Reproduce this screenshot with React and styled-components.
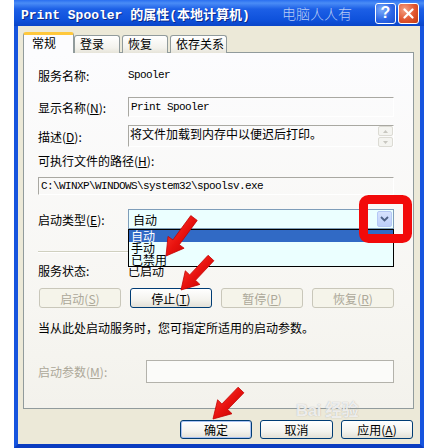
import React from "react";
import styled, { createGlobalStyle } from "styled-components";

const CJK = `"Noto Sans CJK SC", "Liberation Sans", sans-serif`;
const MONO = `"Liberation Mono", "Noto Sans CJK SC", monospace`;

const GlobalStyle = createGlobalStyle`
  html, body { margin: 0; padding: 0; background: #fff; }
  body { width: 434px; height: 448px; overflow: hidden; }
`;

const Page = styled.div`
  position: relative;
  width: 434px;
  height: 448px;
  padding-left: 14px;
  box-sizing: border-box;
  font-family: ${CJK};
  font-size: 12px;
  color: #000;
`;

const Window = styled.div`
  width: 410px;
  height: 448px;
  display: flex;
  flex-direction: column;
`;

const TitleBar = styled.div`
  height: 26px;
  flex: none;
  display: flex;
  align-items: center;
  padding: 0 5px 0 7px;
  background: linear-gradient(180deg, #2a6ff0 0%, #4a8cf6 12%, #1c5fe6 35%, #0f52dc 75%, #0a45c8 100%);
`;

const Title = styled.div`
  flex: 1;
  color: #fff;
  font-family: ${MONO};
  font-weight: bold;
  font-size: 13px;
  white-space: nowrap;
  text-shadow: 1px 1px 0 #0b2a8a;
`;

const Watermark = styled.span`
  font-family: ${CJK};
  font-size: 14px;
  font-weight: 300;
  color: #b9ccf4;
  margin-right: 21px;
`;

const CapButton = styled.div`
  width: 21px;
  height: 21px;
  box-sizing: border-box;
  margin-left: 2px;
  border: 1px solid #fff;
  border-radius: 3px;
  display: flex;
  align-items: center;
  justify-content: center;
  color: #fff;
  font-family: "Liberation Sans", sans-serif;
  font-weight: bold;
  font-size: 16px;
  background: ${(p) =>
    p.$close
      ? "radial-gradient(circle at 30% 30%, #f4a184, #e1552f 55%, #c13a12)"
      : "radial-gradient(circle at 30% 30%, #80aefa, #2c66e6 55%, #1b4fcf)"};
`;

const Body = styled.div`
  flex: 1;
  background: #ece9d8;
  border: 4px solid #1654de;
  border-top: none;
  border-bottom-color: #0a3cc0;
  padding: 6px 6px 0 5px;
  display: flex;
  flex-direction: column;
`;

const Tabs = styled.div`
  display: flex;
  align-items: flex-end;
  height: 21px;
  margin-bottom: -1px;
  position: relative;
  z-index: 1;
`;

const Tab = styled.div`
  box-sizing: border-box;
  width: ${(p) => p.$w}px;
  margin-left: ${(p) => p.$ml || 0}px;
  height: ${(p) => (p.$active ? 21 : 18)}px;
  border: 1px solid #919b9c;
  border-bottom: none;
  border-top: ${(p) => (p.$active ? "3px solid #ffc83c" : "1px solid #919b9c")};
  border-radius: 3px 3px 0 0;
  background: ${(p) => (p.$active ? "#fcfcfe" : "linear-gradient(#ffffff, #f3f2ec 70%, #e6e4da)")};
  padding-left: ${(p) => (p.$active ? 8 : 5)}px;
  line-height: ${(p) => (p.$active ? 15 : 16)}px;
  font-size: 12px;
  white-space: nowrap;
  overflow: hidden;
`;

const Panel = styled.div`
  height: 357px;
  box-sizing: border-box;
  border: 1px solid #919b9c;
  background: linear-gradient(#fcfcfe, #f7f6f2 70%, #f3f2ec);
  padding: 14px 19px 0 14px;
  display: flex;
  flex-direction: column;
`;

const Row = styled.div`
  display: flex;
  align-items: ${(p) => p.$align || "center"};
  height: ${(p) => p.$h}px;
  margin-top: ${(p) => p.$mt || 0}px;
  flex: none;
  position: relative;
`;

const Label = styled.div`
  width: ${(p) => p.$w || 90}px;
  flex: none;
  white-space: nowrap;
  color: ${(p) => (p.$disabled ? "#aca899" : "#000")};
`;

const MonoText = styled.span`
  font-family: ${MONO};
  font-size: 11px;
  letter-spacing: -0.6px;
  white-space: nowrap;
`;

const ReadBox = styled.div`
  flex: 1;
  align-self: stretch;
  box-sizing: border-box;
  border-top: 1px solid #a9a8a2;
  border-left: 1px solid #a9a8a2;
  border-right: 1px solid #fff;
  border-bottom: 1px solid #fff;
  padding: ${(p) => p.$pad || "0 0 0 2px"};
  display: flex;
  align-items: ${(p) => p.$align || "flex-start"};
  line-height: 14px;
`;

const BoxText = styled.div`
  flex: 1;
  white-space: nowrap;
  overflow: hidden;
`;

const ScrollCol = styled.div`
  display: flex;
  flex-direction: column;
  gap: 1px;
`;

const ScrollBtn = styled.div`
  width: 15px;
  height: 10px;
  box-sizing: border-box;
  border: 1px solid #dcdbd4;
  border-radius: 2px;
  background: #f4f4f0;
  display: flex;
  align-items: center;
  justify-content: center;
`;

const Combo = styled.div`
  flex: 1;
  align-self: stretch;
  position: relative;
  box-sizing: border-box;
  border: 1px solid #7f9db9;
  background: #ebffff;
  display: flex;
  align-items: center;
  padding: 1px 1px 1px 4px;
`;

const ComboArrow = styled.div`
  width: 15px;
  height: 16px;
  box-sizing: border-box;
  border: 1px solid #b5c8f5;
  border-radius: 2px;
  background: linear-gradient(#d6e2fd, #bccffa);
  display: flex;
  align-items: center;
  justify-content: center;
`;

const DropList = styled.div`
  position: absolute;
  top: calc(100% + 1px);
  left: -1px;
  right: -1px;
  height: 38px;
  box-sizing: border-box;
  border: 1px solid #000;
  background: #ebffff;
  z-index: 5;
  display: flex;
  flex-direction: column;
`;

const DropItem = styled.div`
  height: 12px;
  line-height: 12px;
  padding-left: 2px;
  background: ${(p) => (p.$selected ? "#316ac5" : "transparent")};
  color: ${(p) => (p.$selected ? "#fff" : "#000")};
`;

const Separator = styled.div`
  margin-top: 22px;
  border-top: 1px solid #d0d0bf;
  border-bottom: 1px solid #fff;
  flex: none;
`;

const ButtonRow = styled.div`
  display: flex;
  justify-content: space-between;
  height: 20px;
  margin-top: 11px;
  padding-left: 1px;
  flex: none;
`;

const XPButton = styled.div`
  width: ${(p) => p.$w || 82}px;
  height: ${(p) => p.$h || 20}px;
  box-sizing: border-box;
  border: 1px solid ${(p) => (p.$disabled ? "#c9c7ba" : "#003c74")};
  border-radius: 3px;
  background: ${(p) =>
    p.$disabled ? "#f5f4ea" : "linear-gradient(#ffffff, #f4f3ee 60%, #e3e0d6)"};
  color: ${(p) => (p.$disabled ? "#aca899" : "#000")};
  box-shadow: ${(p) => (p.$default ? "inset 0 0 0 1px #a9c2f2" : "none")};
  display: flex;
  align-items: center;
  justify-content: center;
  white-space: nowrap;
`;

const Info = styled.div`
  margin-top: 13px;
  height: 14px;
  line-height: 14px;
  white-space: nowrap;
  flex: none;
`;

const ParamInput = styled.div`
  flex: 1;
  align-self: stretch;
  border: 1px solid #b3b2ab;
  background: #fbfbf9;
`;

const Footer = styled.div`
  display: flex;
  justify-content: flex-end;
  gap: 8px;
  margin-top: 11px;
  padding-right: 1px;
`;

const Overlay = styled.svg`
  position: absolute;
  left: 0;
  top: 0;
  pointer-events: none;
  z-index: 10;
`;

const BaiduMark = styled.div`
  position: absolute;
  left: 296px;
  top: 396px;
  font-family: "Liberation Sans", ${CJK};
  font-size: 17px;
  font-weight: bold;
  color: rgba(255, 255, 255, 0.8);
  text-shadow: 0 0 1px rgba(140, 140, 140, 0.7);
  letter-spacing: -0.5px;
  z-index: 9;
  white-space: nowrap;
`;

const Mn = ({ k }) => (
  <>
    (<u>{k}</u>)
  </>
);

function arrowPoints(x1, y1, x2, y2, shaft = 4, head = 10, headLen = 17) {
  const dx = x2 - x1;
  const dy = y2 - y1;
  const L = Math.hypot(dx, dy);
  const ux = dx / L;
  const uy = dy / L;
  const nx = -uy;
  const ny = ux;
  const bx = x2 - ux * headLen;
  const by = y2 - uy * headLen;
  const pts = [
    [x1 + nx * shaft, y1 + ny * shaft],
    [bx + nx * shaft, by + ny * shaft],
    [bx + nx * head, by + ny * head],
    [x2, y2],
    [bx - nx * head, by - ny * head],
    [bx - nx * shaft, by - ny * shaft],
    [x1 - nx * shaft, y1 - ny * shaft],
  ];
  return pts.map((p) => p.map((v) => v.toFixed(1)).join(",")).join(" ");
}

const arrows = [
  [194, 218, 166, 256],
  [211, 258, 181, 290],
  [241, 390, 213, 419],
];

const Annotations = () => (
  <Overlay width="434" height="448" viewBox="0 0 434 448">
    <defs>
      <linearGradient id="redg" x1="0" y1="0" x2="1" y2="1">
        <stop offset="0" stopColor="#ff4a3a" />
        <stop offset="0.5" stopColor="#e8120e" />
        <stop offset="1" stopColor="#b80000" />
      </linearGradient>
    </defs>
    <rect x="363.5" y="199.5" width="44" height="39" rx="5" fill="none" stroke="#f20a0a" strokeWidth="9" />
    {arrows.map((a, i) => (
      <polygon key={i} points={arrowPoints(...a)} fill="url(#redg)" stroke="#c40000" strokeWidth="0.8" strokeLinejoin="round" />
    ))}
  </Overlay>
);

const App = () => {
  return (
    <Page>
      <GlobalStyle />
      <Window>
        <TitleBar>
          <Title>Print Spooler 的属性(本地计算机)</Title>
          <Watermark>电脑人人有</Watermark>
          <CapButton>?</CapButton>
          <CapButton $close>
            <svg width="11" height="11" viewBox="0 0 11 11">
              <path d="M1.5 1.5 L9.5 9.5 M9.5 1.5 L1.5 9.5" stroke="#fff" strokeWidth="2.2" strokeLinecap="round" />
            </svg>
          </CapButton>
        </TitleBar>
        <Body>
          <Tabs>
            <Tab $active $w={51}>常规</Tab>
            <Tab $w={46}>登录</Tab>
            <Tab $w={46} $ml={2}>恢复</Tab>
            <Tab $w={57} $ml={2}>依存关系</Tab>
          </Tabs>
          <Panel>
            <Row $h={16}>
              <Label>服务名称:</Label>
              <MonoText>Spooler</MonoText>
            </Row>
            <Row $h={20} $mt={14}>
              <Label>
                显示名称<Mn k="N" />:
              </Label>
              <ReadBox>
                <BoxText>
                  <MonoText>Print Spooler</MonoText>
                </BoxText>
              </ReadBox>
            </Row>
            <Row $h={22} $mt={8}>
              <Label>
                描述<Mn k="D" />:
              </Label>
              <ReadBox $pad="0 0 0 1px">
                <BoxText style={{ paddingTop: 1 }}>将文件加载到内存中以便迟后打印。</BoxText>
                <ScrollCol>
                  <ScrollBtn>
                    <svg width="5" height="3" viewBox="0 0 5 3"><path d="M0 3 L2.5 0 L5 3Z" fill="#c8c7c0" /></svg>
                  </ScrollBtn>
                  <ScrollBtn>
                    <svg width="5" height="3" viewBox="0 0 5 3"><path d="M0 0 L2.5 3 L5 0Z" fill="#c8c7c0" /></svg>
                  </ScrollBtn>
                </ScrollCol>
              </ReadBox>
            </Row>
            <Row $h={14} $mt={6}>
              <Label $w={200}>
                可执行文件的路径<Mn k="H" />:
              </Label>
            </Row>
            <Row $h={18} $mt={10}>
              <ReadBox $align="center">
                <MonoText>C:\WINXP\WINDOWS\system32\spoolsv.exe</MonoText>
              </ReadBox>
            </Row>
            <Row $h={20} $mt={14}>
              <Label>
                启动类型<Mn k="E" />:
              </Label>
              <Combo>
                <BoxText>自动</BoxText>
                <ComboArrow>
                  <svg width="9" height="6" viewBox="0 0 9 6">
                    <path d="M1 1 L4.5 4.5 L8 1" fill="none" stroke="#4d6185" strokeWidth="1.8" />
                  </svg>
                </ComboArrow>
                <DropList>
                  <DropItem $selected>自动</DropItem>
                  <DropItem>手动</DropItem>
                  <DropItem>已禁用</DropItem>
                </DropList>
              </Combo>
            </Row>
            <Separator />
            <Row $h={14} $mt={10}>
              <Label>服务状态:</Label>
              <span>已启动</span>
            </Row>
            <ButtonRow>
              <XPButton $disabled>
                启动<Mn k="S" />
              </XPButton>
              <XPButton>
                停止<Mn k="T" />
              </XPButton>
              <XPButton $disabled>
                暂停<Mn k="P" />
              </XPButton>
              <XPButton $disabled>
                恢复<Mn k="R" />
              </XPButton>
            </ButtonRow>
            <Info>当从此处启动服务时，您可指定所适用的启动参数。</Info>
            <Row $h={23} $mt={25}>
              <Label $w={108} $disabled>
                启动参数<Mn k="M" />:
              </Label>
              <ParamInput />
            </Row>
          </Panel>
          <Footer>
            <XPButton $w={72} $h={19} $default>确定</XPButton>
            <XPButton $w={73} $h={19}>取消</XPButton>
            <XPButton $w={72} $h={19}>
              应用<Mn k="A" />
            </XPButton>
          </Footer>
        </Body>
      </Window>
      <BaiduMark>Bai 经验</BaiduMark>
      <Annotations />
    </Page>
  );
};

export default App;
